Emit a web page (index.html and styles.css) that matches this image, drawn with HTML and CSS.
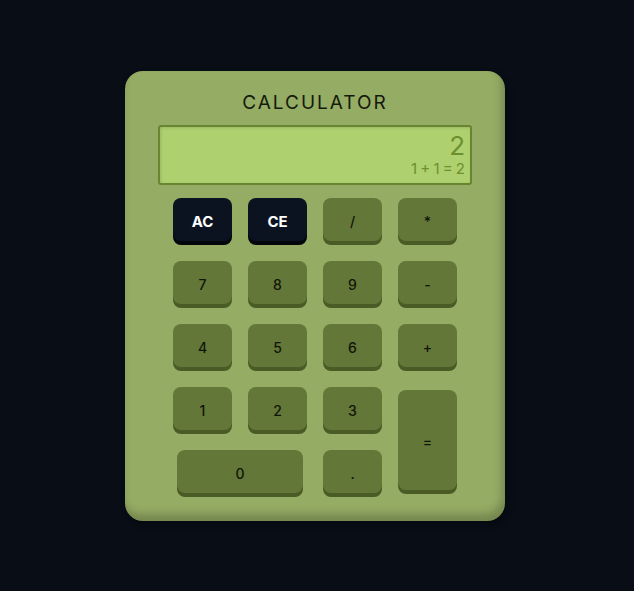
FILE: index.html
```html
<!DOCTYPE html>
<html>
<head>
<meta charset="utf-8">
<link rel="stylesheet" href="styles.css">
</head>
<body>
<div class="calc">
  <h1 class="title">CALCULATOR</h1>
  <div class="display">
    <div class="result">2</div>
    <div class="expr">1 + 1 = 2</div>
  </div>
  <div class="keys">
    <button class="key dark">AC</button>
    <button class="key dark">CE</button>
    <button class="key">/</button>
    <button class="key">*</button>
    <button class="key">7</button>
    <button class="key">8</button>
    <button class="key">9</button>
    <button class="key">-</button>
    <button class="key">4</button>
    <button class="key">5</button>
    <button class="key">6</button>
    <button class="key">+</button>
    <button class="key">1</button>
    <button class="key">2</button>
    <button class="key">3</button>
    <button class="key equals">=</button>
    <button class="key zero">0</button>
    <button class="key">.</button>
  </div>
</div>
</body>
</html>
```

FILE: styles.css
```css
html, body {
  margin: 0;
  height: 100%;
}
body {
  background: #080d16;
  display: flex;
  align-items: center;
  justify-content: center;
  padding-right: 4px;
  box-sizing: border-box;
  font-family: Inter, "Noto Sans", sans-serif;
}
.calc {
  width: 380px;
  height: 450px;
  box-sizing: border-box;
  background: #95ac64;
  border-radius: 18px;
  padding: 20px 33px 0;
  box-shadow: inset -3px -7px 8px rgba(0, 0, 0, 0.22), 2px 3px 6px rgba(0, 0, 0, 0.4);
  display: flex;
  flex-direction: column;
  align-items: center;
}
.title {
  margin: 0;
  font-size: 19px;
  line-height: 24px;
  font-weight: 400;
  letter-spacing: 2px;
  color: #141a0c;
}
.display {
  margin-top: 10px;
  width: 314px;
  height: 60px;
  box-sizing: border-box;
  background: #aed06f;
  border: 2px solid #67862f;
  border-radius: 3px;
  box-shadow: inset 1px 1px 3px rgba(0, 0, 0, 0.12);
  padding: 5px 5px 0 0;
  text-align: right;
  color: #6d8f2c;
}
.result {
  font-size: 26px;
  line-height: 28px;
}
.expr {
  font-size: 15px;
  line-height: 18px;
  word-spacing: -1px;
}
.keys {
  margin-top: 13px;
  display: grid;
  grid-template-columns: repeat(4, 59px);
  grid-auto-rows: 43px;
  column-gap: 16px;
  row-gap: 20px;
}
.key {
  border: none;
  border-radius: 8px;
  background: #637738;
  box-shadow: 0 4px 0 #4a5b26;
  font-family: inherit;
  font-size: 14px;
  font-weight: 500;
  color: #111508;
  padding: 4px 0 0;
  margin: 0;
}
.key.dark {
  background: #0b1320;
  box-shadow: 0 4px 0 #03060b;
  color: #ffffff;
  font-weight: 700;
  font-size: 15px;
}
.equals {
  grid-column: 4;
  grid-row: 4 / span 2;
  margin-top: 3px;
  height: 100px;
}
.zero {
  grid-column: 1 / span 2;
  margin: 0 4px;
}
```
